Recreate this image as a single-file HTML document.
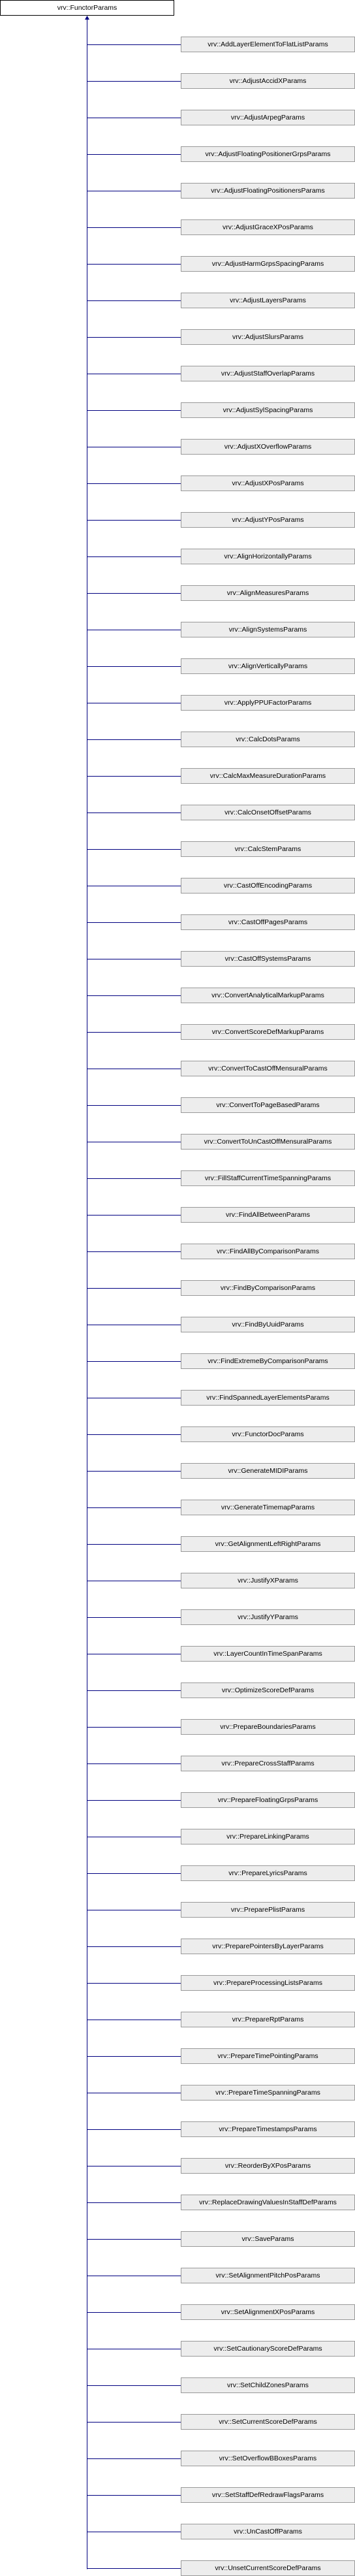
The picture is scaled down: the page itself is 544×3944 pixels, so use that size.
<!DOCTYPE html>
<html><head><meta charset="utf-8"><style>
html,body{margin:0;padding:0;background:#fff;}
body{width:544px;height:3944px;position:relative;overflow:hidden;font-family:"Liberation Sans",Arial,sans-serif;font-size:10.5px;}
.b{position:absolute;left:277px;width:265px;height:22px;border:1px solid #999;background:#ededed;text-align:center;line-height:22px;color:#000;white-space:nowrap;}
.t{position:absolute;left:0;top:0;width:265px;height:22px;border:1px solid #000;background:#fff;text-align:center;line-height:22px;}
svg{position:absolute;left:0;top:0;}
</style></head><body>
<svg width="544" height="3944">
<g stroke="#000080" stroke-width="1">
<line x1="133.5" y1="28" x2="133.5" y2="3933.5"/>
</g>
<polygon points="133.5,24 130,30 137,30" fill="#000080"/>
<g stroke="#000080" stroke-width="1" id="h"></g>
<g stroke="#000080" stroke-width="1">
<line x1="133" y1="68.5" x2="277" y2="68.5"/><line x1="133" y1="124.5" x2="277" y2="124.5"/><line x1="133" y1="180.5" x2="277" y2="180.5"/><line x1="133" y1="236.5" x2="277" y2="236.5"/><line x1="133" y1="292.5" x2="277" y2="292.5"/><line x1="133" y1="348.5" x2="277" y2="348.5"/><line x1="133" y1="404.5" x2="277" y2="404.5"/><line x1="133" y1="460.5" x2="277" y2="460.5"/><line x1="133" y1="516.5" x2="277" y2="516.5"/><line x1="133" y1="572.5" x2="277" y2="572.5"/>
<line x1="133" y1="628.5" x2="277" y2="628.5"/><line x1="133" y1="684.5" x2="277" y2="684.5"/><line x1="133" y1="740.5" x2="277" y2="740.5"/><line x1="133" y1="796.5" x2="277" y2="796.5"/><line x1="133" y1="852.5" x2="277" y2="852.5"/><line x1="133" y1="908.5" x2="277" y2="908.5"/><line x1="133" y1="964.5" x2="277" y2="964.5"/><line x1="133" y1="1020.5" x2="277" y2="1020.5"/><line x1="133" y1="1076.5" x2="277" y2="1076.5"/><line x1="133" y1="1132.5" x2="277" y2="1132.5"/>
<line x1="133" y1="1188.5" x2="277" y2="1188.5"/><line x1="133" y1="1244.5" x2="277" y2="1244.5"/><line x1="133" y1="1300.5" x2="277" y2="1300.5"/><line x1="133" y1="1356.5" x2="277" y2="1356.5"/><line x1="133" y1="1412.5" x2="277" y2="1412.5"/><line x1="133" y1="1468.5" x2="277" y2="1468.5"/><line x1="133" y1="1524.5" x2="277" y2="1524.5"/><line x1="133" y1="1580.5" x2="277" y2="1580.5"/><line x1="133" y1="1636.5" x2="277" y2="1636.5"/><line x1="133" y1="1692.5" x2="277" y2="1692.5"/>
<line x1="133" y1="1748.5" x2="277" y2="1748.5"/><line x1="133" y1="1804.5" x2="277" y2="1804.5"/><line x1="133" y1="1860.5" x2="277" y2="1860.5"/><line x1="133" y1="1916.5" x2="277" y2="1916.5"/><line x1="133" y1="1972.5" x2="277" y2="1972.5"/><line x1="133" y1="2028.5" x2="277" y2="2028.5"/><line x1="133" y1="2084.5" x2="277" y2="2084.5"/><line x1="133" y1="2140.5" x2="277" y2="2140.5"/><line x1="133" y1="2196.5" x2="277" y2="2196.5"/><line x1="133" y1="2252.5" x2="277" y2="2252.5"/>
<line x1="133" y1="2308.5" x2="277" y2="2308.5"/><line x1="133" y1="2364.5" x2="277" y2="2364.5"/><line x1="133" y1="2420.5" x2="277" y2="2420.5"/><line x1="133" y1="2476.5" x2="277" y2="2476.5"/><line x1="133" y1="2532.5" x2="277" y2="2532.5"/><line x1="133" y1="2588.5" x2="277" y2="2588.5"/><line x1="133" y1="2644.5" x2="277" y2="2644.5"/><line x1="133" y1="2700.5" x2="277" y2="2700.5"/><line x1="133" y1="2756.5" x2="277" y2="2756.5"/><line x1="133" y1="2812.5" x2="277" y2="2812.5"/>
<line x1="133" y1="2868.5" x2="277" y2="2868.5"/><line x1="133" y1="2924.5" x2="277" y2="2924.5"/><line x1="133" y1="2980.5" x2="277" y2="2980.5"/><line x1="133" y1="3036.5" x2="277" y2="3036.5"/><line x1="133" y1="3092.5" x2="277" y2="3092.5"/><line x1="133" y1="3148.5" x2="277" y2="3148.5"/><line x1="133" y1="3204.5" x2="277" y2="3204.5"/><line x1="133" y1="3260.5" x2="277" y2="3260.5"/><line x1="133" y1="3316.5" x2="277" y2="3316.5"/><line x1="133" y1="3372.5" x2="277" y2="3372.5"/>
<line x1="133" y1="3428.5" x2="277" y2="3428.5"/><line x1="133" y1="3484.5" x2="277" y2="3484.5"/><line x1="133" y1="3540.5" x2="277" y2="3540.5"/><line x1="133" y1="3596.5" x2="277" y2="3596.5"/><line x1="133" y1="3652.5" x2="277" y2="3652.5"/><line x1="133" y1="3708.5" x2="277" y2="3708.5"/><line x1="133" y1="3764.5" x2="277" y2="3764.5"/><line x1="133" y1="3820.5" x2="277" y2="3820.5"/><line x1="133" y1="3876.5" x2="277" y2="3876.5"/><line x1="133" y1="3932.5" x2="277" y2="3932.5"/>
</g>
</svg>
<div class="t">vrv::FunctorParams</div>
<div class="b" style="top:56px">vrv::AddLayerElementToFlatListParams</div>
<div class="b" style="top:112px">vrv::AdjustAccidXParams</div>
<div class="b" style="top:168px">vrv::AdjustArpegParams</div>
<div class="b" style="top:224px">vrv::AdjustFloatingPositionerGrpsParams</div>
<div class="b" style="top:280px">vrv::AdjustFloatingPositionersParams</div>
<div class="b" style="top:336px">vrv::AdjustGraceXPosParams</div>
<div class="b" style="top:392px">vrv::AdjustHarmGrpsSpacingParams</div>
<div class="b" style="top:448px">vrv::AdjustLayersParams</div>
<div class="b" style="top:504px">vrv::AdjustSlursParams</div>
<div class="b" style="top:560px">vrv::AdjustStaffOverlapParams</div>
<div class="b" style="top:616px">vrv::AdjustSylSpacingParams</div>
<div class="b" style="top:672px">vrv::AdjustXOverflowParams</div>
<div class="b" style="top:728px">vrv::AdjustXPosParams</div>
<div class="b" style="top:784px">vrv::AdjustYPosParams</div>
<div class="b" style="top:840px">vrv::AlignHorizontallyParams</div>
<div class="b" style="top:896px">vrv::AlignMeasuresParams</div>
<div class="b" style="top:952px">vrv::AlignSystemsParams</div>
<div class="b" style="top:1008px">vrv::AlignVerticallyParams</div>
<div class="b" style="top:1064px">vrv::ApplyPPUFactorParams</div>
<div class="b" style="top:1120px">vrv::CalcDotsParams</div>
<div class="b" style="top:1176px">vrv::CalcMaxMeasureDurationParams</div>
<div class="b" style="top:1232px">vrv::CalcOnsetOffsetParams</div>
<div class="b" style="top:1288px">vrv::CalcStemParams</div>
<div class="b" style="top:1344px">vrv::CastOffEncodingParams</div>
<div class="b" style="top:1400px">vrv::CastOffPagesParams</div>
<div class="b" style="top:1456px">vrv::CastOffSystemsParams</div>
<div class="b" style="top:1512px">vrv::ConvertAnalyticalMarkupParams</div>
<div class="b" style="top:1568px">vrv::ConvertScoreDefMarkupParams</div>
<div class="b" style="top:1624px">vrv::ConvertToCastOffMensuralParams</div>
<div class="b" style="top:1680px">vrv::ConvertToPageBasedParams</div>
<div class="b" style="top:1736px">vrv::ConvertToUnCastOffMensuralParams</div>
<div class="b" style="top:1792px">vrv::FillStaffCurrentTimeSpanningParams</div>
<div class="b" style="top:1848px">vrv::FindAllBetweenParams</div>
<div class="b" style="top:1904px">vrv::FindAllByComparisonParams</div>
<div class="b" style="top:1960px">vrv::FindByComparisonParams</div>
<div class="b" style="top:2016px">vrv::FindByUuidParams</div>
<div class="b" style="top:2072px">vrv::FindExtremeByComparisonParams</div>
<div class="b" style="top:2128px">vrv::FindSpannedLayerElementsParams</div>
<div class="b" style="top:2184px">vrv::FunctorDocParams</div>
<div class="b" style="top:2240px">vrv::GenerateMIDIParams</div>
<div class="b" style="top:2296px">vrv::GenerateTimemapParams</div>
<div class="b" style="top:2352px">vrv::GetAlignmentLeftRightParams</div>
<div class="b" style="top:2408px">vrv::JustifyXParams</div>
<div class="b" style="top:2464px">vrv::JustifyYParams</div>
<div class="b" style="top:2520px">vrv::LayerCountInTimeSpanParams</div>
<div class="b" style="top:2576px">vrv::OptimizeScoreDefParams</div>
<div class="b" style="top:2632px">vrv::PrepareBoundariesParams</div>
<div class="b" style="top:2688px">vrv::PrepareCrossStaffParams</div>
<div class="b" style="top:2744px">vrv::PrepareFloatingGrpsParams</div>
<div class="b" style="top:2800px">vrv::PrepareLinkingParams</div>
<div class="b" style="top:2856px">vrv::PrepareLyricsParams</div>
<div class="b" style="top:2912px">vrv::PreparePlistParams</div>
<div class="b" style="top:2968px">vrv::PreparePointersByLayerParams</div>
<div class="b" style="top:3024px">vrv::PrepareProcessingListsParams</div>
<div class="b" style="top:3080px">vrv::PrepareRptParams</div>
<div class="b" style="top:3136px">vrv::PrepareTimePointingParams</div>
<div class="b" style="top:3192px">vrv::PrepareTimeSpanningParams</div>
<div class="b" style="top:3248px">vrv::PrepareTimestampsParams</div>
<div class="b" style="top:3304px">vrv::ReorderByXPosParams</div>
<div class="b" style="top:3360px">vrv::ReplaceDrawingValuesInStaffDefParams</div>
<div class="b" style="top:3416px">vrv::SaveParams</div>
<div class="b" style="top:3472px">vrv::SetAlignmentPitchPosParams</div>
<div class="b" style="top:3528px">vrv::SetAlignmentXPosParams</div>
<div class="b" style="top:3584px">vrv::SetCautionaryScoreDefParams</div>
<div class="b" style="top:3640px">vrv::SetChildZonesParams</div>
<div class="b" style="top:3696px">vrv::SetCurrentScoreDefParams</div>
<div class="b" style="top:3752px">vrv::SetOverflowBBoxesParams</div>
<div class="b" style="top:3808px">vrv::SetStaffDefRedrawFlagsParams</div>
<div class="b" style="top:3864px">vrv::UnCastOffParams</div>
<div class="b" style="top:3920px">vrv::UnsetCurrentScoreDefParams</div>
</body></html>
